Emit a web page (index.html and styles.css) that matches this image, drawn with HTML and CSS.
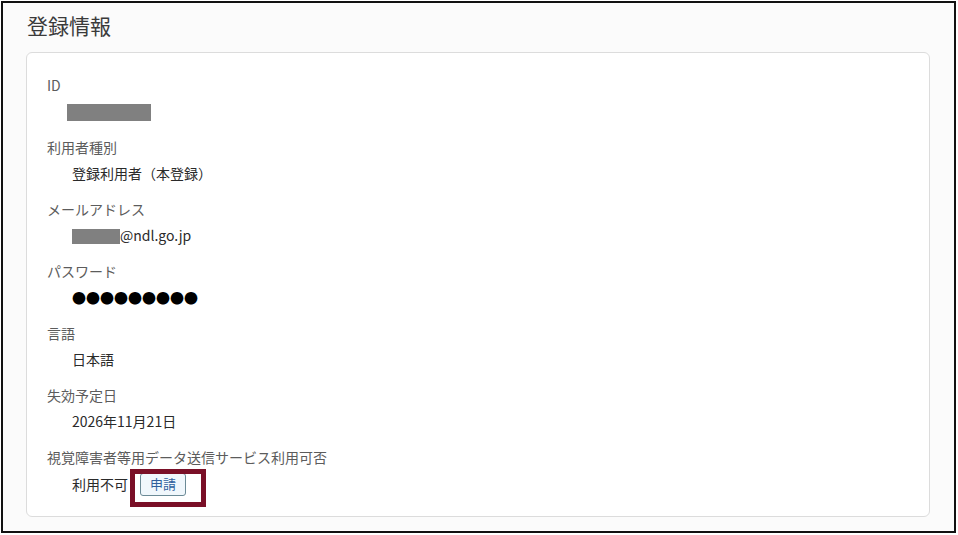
FILE: index.html
```html
<!DOCTYPE html>
<html lang="ja">
<head>
<meta charset="utf-8">
<title>登録情報</title>
<link rel="stylesheet" href="styles.css">
</head>
<body>
<div class="frame">
  <h2 class="title">登録情報</h2>
  <div class="card">
    <dl class="info">
      <div class="group">
        <dt>ID</dt>
        <dd><span class="mask mask-id"></span></dd>
      </div>
      <div class="group">
        <dt>利用者種別</dt>
        <dd>登録利用者（本登録）</dd>
      </div>
      <div class="group">
        <dt>メールアドレス</dt>
        <dd><span class="mask mask-mail"></span>@ndl.go.jp</dd>
      </div>
      <div class="group">
        <dt>パスワード</dt>
        <dd class="dots">●●●●●●●●●</dd>
      </div>
      <div class="group">
        <dt>言語</dt>
        <dd>日本語</dd>
      </div>
      <div class="group">
        <dt>失効予定日</dt>
        <dd>2026年11月21日</dd>
      </div>
      <div class="group">
        <dt>視覚障害者等用データ送信サービス利用可否</dt>
        <dd class="row">利用不可<span class="btn-wrap"><button class="btn" type="button">申請</button><span class="highlight"></span></span></dd>
      </div>
    </dl>
  </div>
</div>
</body>
</html>
```

FILE: styles.css
```css
html, body {
  margin: 0;
  padding: 0;
  background: #ffffff;
}

body {
  font-family: "Noto Sans CJK JP", "Noto Sans", sans-serif;
}

.frame {
  margin: 1px;
  width: 904px;
  height: 521px;
  border: 2px solid #111111;
  background: #fbfbfb;
  padding: 7px 24px 0 23px;
  box-sizing: content-box;
}

.title {
  margin: 0 0 12px 1px;
  font-size: 21px;
  line-height: 30px;
  font-weight: 400;
  color: #3a3a3a;
}

.card {
  background: #ffffff;
  border: 1px solid #dcdcdc;
  border-radius: 6px;
  padding: 21px 20px 20px 20px;
}

.info {
  margin: 0;
  display: flex;
  flex-direction: column;
  gap: 14px;
}

.group {
  display: flex;
  flex-direction: column;
  gap: 4px;
}

dt {
  font-size: 14px;
  line-height: 22px;
  color: #5c5c5c;
}

dd {
  margin: 0 0 0 25px;
  font-size: 14px;
  line-height: 22px;
  color: #2a2a2a;
  height: 22px;
}

.mask {
  display: inline-block;
  background: #808080;
  vertical-align: middle;
}

.mask-id {
  width: 84px;
  height: 17px;
  margin-left: -5px;
  margin-top: -2px;
}

.mask-mail {
  width: 48px;
  height: 15px;
  margin-top: -1px;
}

.dots {
  font-size: 14px;
  color: #000000;
}

.row {
  display: flex;
  align-items: center;
  height: 24px;
}

.btn-wrap {
  position: relative;
  margin-left: 12px;
  display: inline-flex;
}

.btn {
  font-family: "Noto Sans CJK JP", "Noto Sans", sans-serif;
  font-size: 13px;
  line-height: 20px;
  height: 23px;
  padding: 0 9px;
  color: #2f5f9c;
  background: #f0f7fc;
  border: 1px solid #6b8a96;
  border-radius: 3px;
}

.highlight {
  position: absolute;
  left: -10px;
  right: -20px;
  top: -4px;
  bottom: -11px;
  border: 5px solid #7a0f27;
}
```
